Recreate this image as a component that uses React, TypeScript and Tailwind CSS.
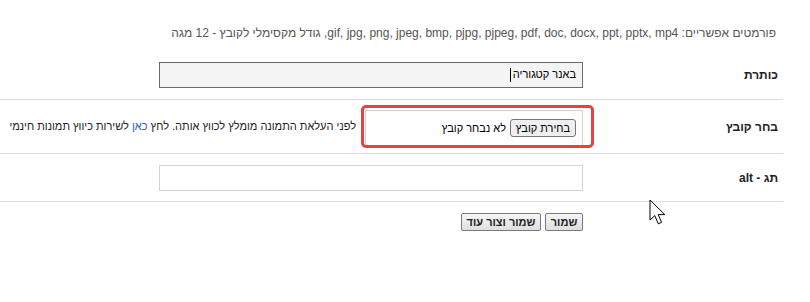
import React from 'react';

const font = { fontFamily: '"Liberation Sans", Arial, sans-serif' };

function Row({ label, children, className = '' }: { label: string; children: React.ReactNode; className?: string }) {
  return (
    <div className={`flex items-center border-b border-[#dcdcdc] ${className}`}>
      <div className="w-[200px] shrink-0 pr-[5px] text-[12px] font-bold text-[#222]">{label}</div>
      <div className="flex h-full flex-1 items-center min-w-0">{children}</div>
    </div>
  );
}

export default function App() {
  return (
    <div className="relative h-[302px] w-[810px] overflow-hidden bg-white" style={font}>
      <div dir="rtl" className="w-[783px]">
        <div className="h-[50px] pt-[26px] pr-[7px] text-[12px] leading-[14px] text-[#555]">
          פורמטים אפשריים: gif, jpg, png, jpeg, bmp, pjpg, pjpeg, pdf, doc, docx, ppt, pptx, mp4, גודל מקסימלי לקובץ - 12 מגה
        </div>

        <Row label="כותרת" className="h-[50px]">
          <div className="flex h-[26px] w-[424px] items-center border border-[#6b6b6b] bg-[#f4f4f4] pr-[6px] text-[11px] text-black">
            <span>באנר קטגוריה</span>
            <span className="mr-[2px] inline-block h-[14px] w-px bg-black" />
          </div>
        </Row>

        <Row label="בחר קובץ" className="h-[54px]">
          <div className="relative mt-[10px] flex h-[36px] w-[218px] shrink-0 self-start items-start border border-[#cfcfcf] pt-[8px] pr-[6px] text-[11px]">
            <button className="h-[18px] w-[66px] rounded-[3px] border border-[#767676] bg-[#efefef] text-[11px] leading-[16px] text-black">
              בחירת קובץ
            </button>
            <span className="mr-[4px] leading-[18px] text-black">לא נבחר קובץ</span>
            <div className="absolute -top-[6px] -left-[5px] h-[43px] w-[233px] rounded-[5px] border-[3px] border-[#e8413f]" />
          </div>
          <div className="mr-[9px] whitespace-nowrap text-[11px] text-[#222]">
            לפני העלאת התמונה מומלץ לכווץ אותה. לחץ <span className="text-[#2a5db0]">כאן</span> לשירות כיווץ תמונות חינמי
          </div>
        </Row>

        <Row label="תג - alt" className="h-[48px]">
          <div className="h-[26px] w-[424px] border border-[#d3d3d3] bg-white" />
        </Row>

        <div className="flex gap-[4px] pt-[11px] pr-[200px]">
          <button className="h-[18px] w-[38px] rounded-[2px] border border-[#7a7a7a] bg-gradient-to-b from-[#f6f6f6] to-[#dedede] text-[11px] font-bold leading-[16px] text-[#222]">
            שמור
          </button>
          <button className="h-[18px] w-[80px] rounded-[2px] border border-[#7a7a7a] bg-gradient-to-b from-[#f6f6f6] to-[#dedede] text-[11px] font-bold leading-[16px] text-[#222]">
            שמור וצור עוד
          </button>
        </div>
      </div>

      <svg className="absolute left-[649px] top-[199px]" width="18" height="27" viewBox="0 0 18 27">
        <path d="M1 1 L1 21 L5.8 16.6 L9.3 24.8 L12.6 23.4 L9.2 15.6 L15.8 15.6 Z" fill="white" stroke="black" strokeWidth="1" strokeLinejoin="round" />
      </svg>
    </div>
  );
}
